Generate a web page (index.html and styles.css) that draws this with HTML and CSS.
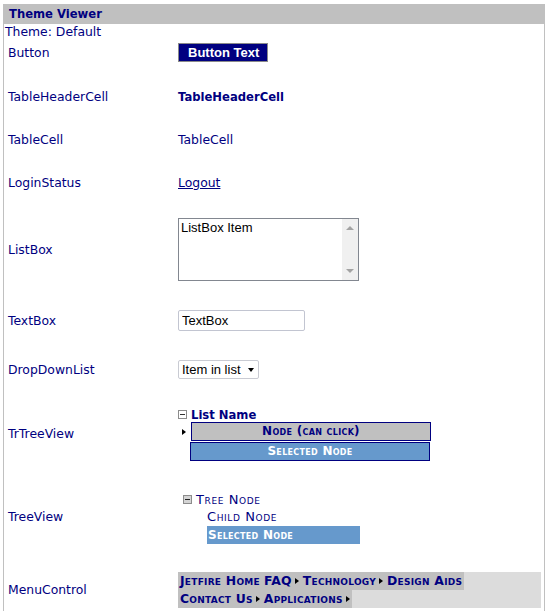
FILE: index.html
```html
<!DOCTYPE html>
<html>
<head>
  <meta charset="UTF-8">
  <title>Theme Viewer</title>
  <link rel="stylesheet" href="styles.css">
</head>
<body>
<div class="viewer">
  <div class="viewer-title">Theme Viewer</div>
  <div class="theme-name">Theme: Default</div>

  <div class="rows">
    <div class="row">
      <div class="label">Button</div>
      <div><button class="btn">Button Text</button></div>
    </div>

    <div class="row">
      <div class="label">TableHeaderCell</div>
      <div class="th-cell">TableHeaderCell</div>
    </div>

    <div class="row">
      <div class="label">TableCell</div>
      <div class="td-cell">TableCell</div>
    </div>

    <div class="row">
      <div class="label">LoginStatus</div>
      <div class="td-cell"><a href="#" class="login">Logout</a></div>
    </div>

    <div class="row">
      <div class="label">ListBox</div>
      <div>
        <div class="listbox">
          <div class="listbox-items">ListBox Item</div>
          <div class="scrollbar">
            <span class="sb-up"></span>
            <span class="sb-down"></span>
          </div>
        </div>
      </div>
    </div>

    <div class="row row-textbox">
      <div class="label">TextBox</div>
      <div><input type="text" class="textbox" value="TextBox"></div>
    </div>

    <div class="row row-dropdown">
      <div class="label">DropDownList</div>
      <div>
        <div class="dropdown">Item in list <span class="dd-arrow"></span></div>
      </div>
    </div>

    <div class="row row-trtree">
      <div class="label">TrTreeView</div>
      <div class="trtree">
        <div class="tr-head">
          <svg class="minus" width="9" height="9" viewBox="0 0 9 9"><rect x="0.5" y="0.5" width="8" height="8" fill="#fff" stroke="#8c8c8c"/><path d="M2 4.5h5" stroke="#333"/></svg>
          <span>List Name</span>
        </div>
        <div class="tr-node">
          <span class="tri"></span>
          <div class="tr-box">Node (can click)</div>
        </div>
        <div class="tr-box tr-selected">Selected Node</div>
      </div>
    </div>

    <div class="row row-tree">
      <div class="label">TreeView</div>
      <div class="tree">
        <div class="tree-root">
          <svg class="minus" width="9" height="9" viewBox="0 0 9 9"><rect x="0.5" y="0.5" width="8" height="8" fill="#d4d4d4" stroke="#8c8c8c"/><path d="M2 4.5h5" stroke="#222"/></svg>
          <span>Tree Node</span>
        </div>
        <div class="tree-child">Child Node</div>
        <div class="tree-child tree-selected">Selected Node</div>
      </div>
    </div>

    <div class="row row-menu">
      <div class="label">MenuControl</div>
      <div class="menu">
        <div class="menu-row">
          <a href="#">Jetfire Home</a>
          <a href="#">FAQ<span class="arrow"></span></a>
          <a href="#">Technology<span class="arrow"></span></a>
          <a href="#">Design Aids</a>
        </div>
        <div class="menu-row">
          <a href="#">Contact Us<span class="arrow"></span></a>
          <a href="#">Applications<span class="arrow"></span></a>
        </div>
      </div>
    </div>
  </div>
</div>
</body>
</html>
```

FILE: styles.css
```css
body {
  margin: 4px 4px 0 3px;
  font-family: "DejaVu Sans", Verdana, sans-serif;
  font-size: 12.4px;
  color: #000080;
  background: #fff;
}

.viewer {
  border-left: 1px solid #c0c0c0;
  border-right: 1px solid #c0c0c0;
  min-height: 640px;
}

.viewer-title {
  background: #c0c0c0;
  height: 20px;
  line-height: 20px;
  margin-left: -1px;
  margin-right: -1px;
  padding-left: 6px;
  font-weight: bold;
  font-size: 11.6px;
}

.theme-name {
  line-height: 16px;
  padding-left: 1px;
}

/* rows of the viewer */
.rows {
  display: flex;
  flex-direction: column;
  gap: 27px;
  padding-top: 3px;
}

.row {
  display: grid;
  grid-template-columns: 174px 1fr;
  align-items: center;
}

.label {
  padding-left: 4px;
  line-height: 16px;
}

.btn {
  font-family: "Liberation Sans", Arial, sans-serif;
  font-weight: bold;
  font-size: 13px;
  color: #fff;
  background: #000080;
  border: 1px solid #8a8a8a;
  height: 19px;
  padding: 0 8px 0 9px;
  margin: 0;
  display: block;
}

.th-cell {
  font-weight: bold;
  font-size: 11.6px;
  line-height: 16px;
}

.td-cell {
  line-height: 16px;
}

.login {
  color: #000080;
}

/* listbox */
.listbox {
  width: 181px;
  height: 63px;
  box-sizing: border-box;
  border: 1px solid #828790;
  display: flex;
  background: #fff;
}

.listbox-items {
  flex: 1;
  font-family: "Liberation Sans", Arial, sans-serif;
  font-size: 13px;
  color: #000;
  padding: 1px 2px;
  line-height: 15px;
}

.scrollbar {
  width: 16px;
  background: #f0f0f0;
  display: flex;
  flex-direction: column;
  justify-content: space-between;
  align-items: center;
  padding: 7px 0;
}

.sb-up, .sb-down {
  width: 0;
  height: 0;
  border-left: 4px solid transparent;
  border-right: 4px solid transparent;
}

.sb-up {
  border-bottom: 4px solid #a3a3a3;
}

.sb-down {
  border-top: 4px solid #a3a3a3;
}

/* extra space before some rows */
.row-textbox,
.row-dropdown,
.row-tree {
  margin-top: 2px;
}

.row-trtree,
.row-menu {
  margin-top: 1px;
}

.textbox {
  display: block;
  width: 127px;
  height: 21px;
  box-sizing: border-box;
  margin: 0;
  border: 1px solid #c2c5d1;
  border-radius: 2px;
  padding: 0 3px;
  font-family: "Liberation Sans", Arial, sans-serif;
  font-size: 13px;
  color: #000;
  outline: none;
}

.dropdown {
  width: 81px;
  height: 19px;
  box-sizing: border-box;
  border: 1px solid #c9cbd3;
  border-radius: 2px;
  font-family: "Liberation Sans", Arial, sans-serif;
  font-size: 13px;
  color: #000;
  line-height: 17px;
  padding-left: 3px;
  display: flex;
  align-items: center;
  justify-content: space-between;
  padding-right: 4px;
}

.dd-arrow {
  width: 0;
  height: 0;
  border-left: 3.5px solid transparent;
  border-right: 3.5px solid transparent;
  border-top: 4px solid #000;
}

/* TrTreeView */
.tr-head {
  display: flex;
  align-items: center;
  height: 15px;
  font-weight: bold;
  font-size: 11.6px;
}

.tr-head .minus {
  margin-right: 4px;
}

.tr-node {
  display: flex;
  align-items: center;
}

.tri {
  width: 0;
  height: 0;
  border-top: 3.5px solid transparent;
  border-bottom: 3.5px solid transparent;
  border-left: 4px solid #000;
  margin-left: 4px;
  margin-right: 5px;
}

.tr-box {
  width: 240px;
  height: 19px;
  box-sizing: border-box;
  border: 1px solid #000080;
  background: #c0c0c0;
  text-align: center;
  font-weight: bold;
  font-variant: small-caps;
  font-size: 12px;
  letter-spacing: 0.3px;
  line-height: 17px;
}

.tr-selected {
  background: #6699cc;
  color: #fff;
  margin: 1px 0 0 12px;
}

/* TreeView */
.tree-root {
  display: flex;
  align-items: center;
  height: 18px;
  padding-left: 5px;
  font-variant: small-caps;
  font-size: 13px;
  letter-spacing: 0.6px;
}

.tree-root .minus {
  margin-right: 4px;
}

.tree-child {
  margin-left: 29px;
  height: 18px;
  line-height: 18px;
  font-variant: small-caps;
  font-size: 13px;
  letter-spacing: 0.6px;
}

.tree-selected {
  width: 152px;
  background: #6699cc;
  color: #fff;
  font-weight: bold;
  font-size: 12px;
  letter-spacing: 0.3px;
  padding-left: 1px;
}

/* Menu */
.menu {
  width: 363px;
  background: #dcdcdc;
}

.menu-row {
  display: flex;
  width: fit-content;
  background: #c0c0c0;
}

.menu-row a {
  color: #000080;
  text-decoration: none;
  font-weight: bold;
  font-variant: small-caps;
  letter-spacing: 0.25px;
  line-height: 18px;
  padding: 0 2px;
  display: flex;
  align-items: center;
}

.arrow {
  width: 0;
  height: 0;
  border-top: 3.5px solid transparent;
  border-bottom: 3.5px solid transparent;
  border-left: 4px solid #000;
  margin-left: 3px;
}
```
